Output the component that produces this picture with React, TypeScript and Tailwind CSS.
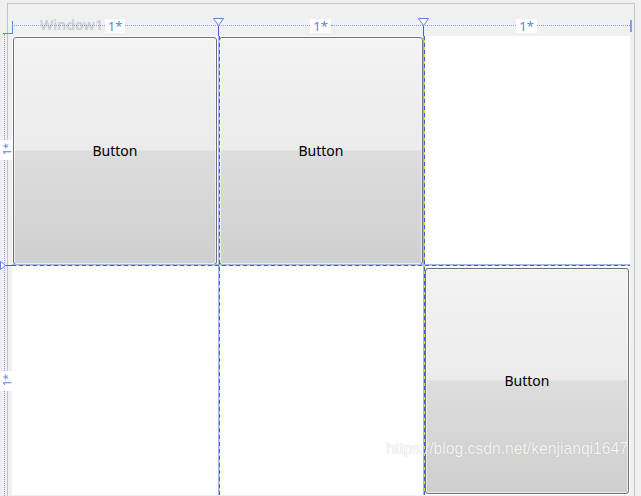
import React from "react";

const dash =
  "bg-[repeating-linear-gradient(to_bottom,#3d63d8_0px,#3d63d8_4px,#d9d94a_4px,#d9d94a_7px)]";

function Btn() {
  return (
    <button className="w-full h-full rounded-[3px] border border-[#707070] bg-[linear-gradient(to_bottom,#f3f3f3_0%,#ebebeb_49.5%,#dddddd_50%,#cfcfcf_100%)] text-[14px] text-black shadow-[inset_0_0_0_1px_rgba(255,255,255,0.6)]">
      Button
    </button>
  );
}

function Marker() {
  return (
    <div className="w-0 shrink-0 flex justify-center">
      <div className="flex flex-col items-center w-[11px] shrink-0">
        <svg width="11" height="8" viewBox="0 0 11 8">
          <path d="M0.5 0.5 H10.5 L5.5 7.5 Z" fill="white" stroke="#5b84e0" strokeWidth="1" />
        </svg>
        <div className="w-px h-[10px] bg-[#3d63d8]" />
      </div>
    </div>
  );
}

function RulerCol({ marker, end }: { marker?: boolean; end?: boolean }) {
  return (
    <div className="flex items-start h-[18px]">
      {marker && <Marker />}
      <div className="flex-1 mt-[7px] border-t border-dotted border-[#7fa0ea]" />
      <div className="mt-[1px] bg-white px-[3px] h-[14px] flex items-center text-[13px] leading-none text-[#5b84e0]">
        1*
      </div>
      <div className="flex-1 mt-[7px] border-t border-dotted border-[#7fa0ea]" />
      {end && <div className="w-[2px] h-[12px] mt-[2px] bg-[#7fa0ea]" />}
    </div>
  );
}

function SideRow() {
  return (
    <div className="flex flex-col items-start h-full">
      <div className="flex-1 ml-[4px] border-l border-dotted border-[#7fa0ea]" />
      <div className="w-[13px] h-[20px] bg-white flex items-center justify-center">
        <span className="[writing-mode:vertical-rl] rotate-180 text-[11px] leading-none text-[#5b84e0]">
          1*
        </span>
      </div>
      <div className="flex-1 ml-[4px] border-l border-dotted border-[#7fa0ea]" />
    </div>
  );
}

export default function App() {
  return (
    <div
      className="relative w-[641px] h-[496px] overflow-hidden bg-[#f0f0f0]"
      style={{ fontFamily: '"Noto Sans", "Open Sans", sans-serif' }}
    >
      {/* window frame + title */}
      <div className="absolute left-[7px] top-[3px] w-[628px] h-[500px] border-l border-t border-r border-[#c4c4c4] pl-[32px] pt-[10px]">
        <div className="text-[14px] font-semibold text-[#cdcdcd]">Window1</div>
      </div>

      {/* design surface */}
      <div className="relative pl-[12px] pt-[36px]">
        <div className="relative w-[618px] h-[459px] bg-white grid grid-cols-3 grid-rows-2">
          <div className="p-px">
            <Btn />
          </div>
          <div className="p-px">
            <Btn />
          </div>
          <div />
          <div />
          <div />
          <div className="p-px pt-[2px] pb-[1px]">
            <Btn />
          </div>

          {/* grid lines */}
          <div className={`absolute left-[206px] top-0 w-[2px] h-full border-l border-[#9fb6f0] ${dash}`} />
          <div className={`absolute left-[411px] top-0 w-[2px] h-full border-l border-[#9fb6f0] ${dash}`} />
          <div className="absolute left-0 top-[228px] w-full h-[2px] border-t border-[#9fb6f0] bg-[repeating-linear-gradient(to_right,#3d63d8_0px,#3d63d8_4px,#d9d94a_4px,#d9d94a_7px)]" />
        </div>
      </div>

      {/* top ruler */}
      <div className="absolute left-[3px] top-[21px] flex items-end">
        <div className="w-[9px] h-[13px] border-b border-[#5b84e0]" />
        <div className="w-px h-[13px] bg-[#5b84e0]" />
      </div>
      <div className="absolute left-[12px] top-[18px] w-[620px] grid grid-cols-[206px_205px_1fr]">
        <RulerCol />
        <RulerCol marker />
        <RulerCol marker end />
      </div>

      {/* left ruler */}
      <div className="absolute left-0 top-[34px] w-[13px] h-[462px] grid grid-rows-2">
        <SideRow />
        <SideRow />
      </div>
      <div className="absolute left-0 top-[261px] flex items-center">
        <svg width="6" height="9" viewBox="0 0 6 9">
          <path d="M0.5 0.5 L5.5 4.5 L0.5 8.5 Z" fill="white" stroke="#5b84e0" strokeWidth="1" />
        </svg>
        <div className="w-[6px] h-px bg-[#3d63d8]" />
      </div>

      {/* watermark */}
      <div
        className="absolute right-[13px] bottom-[35px] text-[15.7px] text-white/90 [text-shadow:0_0_1px_rgba(0,0,0,0.25)]"
        style={{ fontFamily: '"Liberation Sans", Arial, sans-serif' }}
      >
        https://blog.csdn.net/kenjianqi1647
      </div>
    </div>
  );
}
